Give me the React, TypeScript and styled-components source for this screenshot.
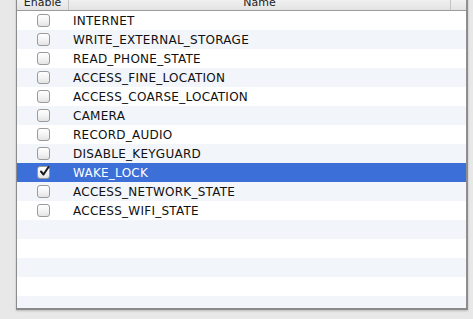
import React from "react";
import styled, { createGlobalStyle } from "styled-components";

const Global = createGlobalStyle`
  html, body { margin: 0; padding: 0; background: #e8e8e8; }
  body { font-family: "DejaVu Sans", "Liberation Sans", sans-serif; overflow: hidden; }
`;

const Page = styled.div`
  width: 473px;
  height: 319px;
  overflow: hidden;
  padding-left: 16px;
  box-sizing: border-box;
`;

const Table = styled.div`
  width: 452px;
  height: 317px;
  margin-top: -7px;
  box-sizing: border-box;
  border: 1px solid #8c8c8c;
  border-top: none;
  border-right: 2px solid #8e8e8e;
  border-bottom: 2px solid #8a8a8a;
  background: #ffffff;
  box-shadow: 0 1px 2px rgba(0, 0, 0, 0.2);
  overflow: hidden;
  display: flex;
  flex-direction: column;
`;

const Header = styled.div`
  display: grid;
  grid-template-columns: 52px 1fr 15px;
  height: 17px;
  flex: none;
  background: linear-gradient(#ffffff, #eeeeee 50%, #e3e3e3);
  border-bottom: 1px solid #9c9c9c;
`;

const HeaderCell = styled.div<{ $last?: boolean }>`
  display: flex;
  align-items: center;
  justify-content: center;
  font-size: 11px;
  color: #222;
  border-right: ${(p) => (p.$last ? "none" : "1px solid #c4c4c4")};
  line-height: 1;
  padding-top: 1px;
`;

const Row = styled.div<{ $alt: boolean; $selected?: boolean }>`
  display: grid;
  grid-template-columns: 52px 1fr;
  height: 19px;
  flex: none;
  align-items: center;
  background: ${(p) => (p.$selected ? "#3c6fd7" : p.$alt ? "#f2f5f9" : "#ffffff")};
  color: ${(p) => (p.$selected ? "#ffffff" : "#111111")};
`;

const CheckCell = styled.div`
  display: flex;
  justify-content: center;
  align-items: center;
`;

const Box = styled.div`
  width: 13px;
  height: 13px;
  box-sizing: border-box;
  border: 1px solid #9a9a9a;
  border-radius: 3px;
  background: linear-gradient(#ffffff, #f4f4f4 50%, #e4e4e4);
  position: relative;
`;

const Check = styled.svg`
  position: absolute;
  left: 1px;
  top: -1px;
`;

const NameCell = styled.div`
  padding-left: 4px;
  font-size: 12px;
  letter-spacing: 0.25px;
  white-space: nowrap;
`;

const perms = [
  "INTERNET",
  "WRITE_EXTERNAL_STORAGE",
  "READ_PHONE_STATE",
  "ACCESS_FINE_LOCATION",
  "ACCESS_COARSE_LOCATION",
  "CAMERA",
  "RECORD_AUDIO",
  "DISABLE_KEYGUARD",
  "WAKE_LOCK",
  "ACCESS_NETWORK_STATE",
  "ACCESS_WIFI_STATE",
];

const rows = [...perms, ...Array(6).fill("")];

export default function App() {
  return (
    <Page>
      <Global />
      <Table>
        <Header>
          <HeaderCell>Enable</HeaderCell>
          <HeaderCell>Name</HeaderCell>
          <HeaderCell $last />
        </Header>
        {rows.map((name, i) => {
          const selected = name === "WAKE_LOCK";
          return (
            <Row key={i} $alt={i % 2 === 1} $selected={selected}>
              <CheckCell>
                {name && (
                  <Box>
                    {selected && (
                      <Check width="11" height="11" viewBox="0 0 11 11">
                        <path d="M2 5.5 L4.5 8.5 L9.5 1" fill="none" stroke="#1b1b1b" strokeWidth="2" strokeLinecap="round" strokeLinejoin="round" />
                      </Check>
                    )}
                  </Box>
                )}
              </CheckCell>
              <NameCell>{name}</NameCell>
            </Row>
          );
        })}
      </Table>
    </Page>
  );
}
